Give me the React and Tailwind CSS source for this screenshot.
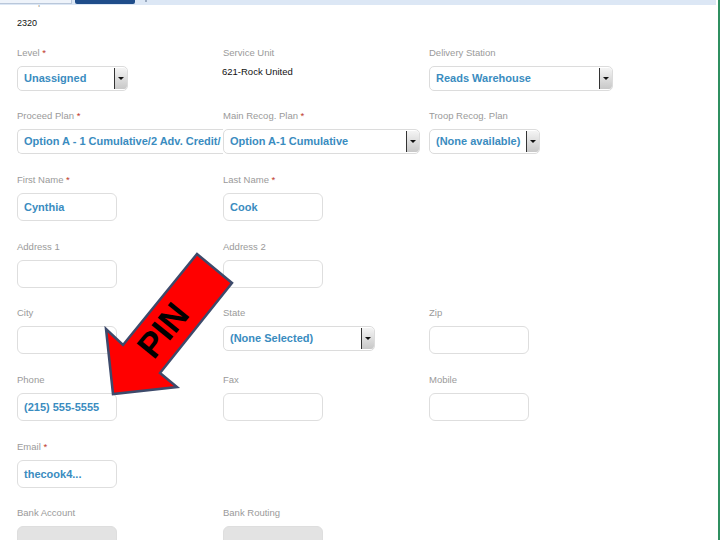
import React from "react";

const label = "block h-[11px] leading-[11px] text-[9.5px] text-[#9a9a9a] whitespace-nowrap";
const valueCls = "text-[11px] font-bold text-[#3a8cc0] whitespace-nowrap";

const Label = ({ text, required }) => (
  <span className={label}>
    {text}
    {required && <span className="text-[#c0392b]"> *</span>}
  </span>
);

const SelectBox = ({ value, width, clip }) => (
  <div
    className={`relative mt-[8px] h-[25px] flex items-center bg-white border border-[#dcdcdc] overflow-hidden ${clip ? "z-0 rounded-l-[5px] border-r-0" : "z-10 rounded-[5px]"}`}
    style={{ width }}
  >
    <span className={`pl-[6px] ${clip ? "" : "pr-[14px]"} overflow-hidden ${valueCls}`}>{value}</span>
    {!clip && (
      <span className="absolute right-[0px] top-[1px] bottom-[1px] w-[13px] border-l border-[#333] bg-gradient-to-b from-[#f4f4f4] to-[#c8c8c8] flex items-center justify-center rounded-r-[3px]">
        <span className="w-0 h-0 border-l-[3px] border-r-[3px] border-t-[3px] border-l-transparent border-r-transparent border-t-[#111]" />
      </span>
    )}
  </div>
);

const TextBox = ({ value, gray }) => (
  <div
    className={`mt-[8px] h-[28px] w-[100px] flex border border-[#dedede] rounded-[6px] ${gray ? "bg-[#e3e3e3] items-end" : "bg-white items-center"}`}
  >
    {value && (
      <span className={`pl-[6px] ${valueCls} ${gray ? "translate-y-[4px]" : ""}`}>{value}</span>
    )}
  </div>
);

const Field = ({ text, required, children }) => (
  <div className="flex flex-col items-start">
    <Label text={text} required={required} />
    {children}
  </div>
);

export default function App() {
  return (
    <div
      className="relative w-[720px] h-[540px] overflow-hidden bg-white"
      style={{ fontFamily: "'Liberation Sans', Arial, sans-serif" }}
    >
      {/* tab strip */}
      <div className="absolute top-0 left-0 w-[716px] h-[5px] bg-[#dce7f5] z-20 flex">
        <div className="w-[72px] h-[4px] bg-[#eef3fa] border-r border-b border-[#b9c7da]" />
        <div className="ml-[3px] w-[60px] h-[4px] bg-[#1f4d8a] rounded-b-[2px]" />
        <div className="ml-[10px] w-[2px] h-[2px] bg-[#9aaac0]" />
      </div>
      <div className="absolute top-0 right-0 w-[2px] h-[540px] bg-[#2f8f60] z-20" />

      <div className="pl-[17px] grid grid-cols-[206px_206px_206px]">
        {/* Group */}
        <div className="col-span-3 -mt-[4px] mb-[18px]">
          <Label text="Group" />
          <div className="mt-[11px] h-[11px] leading-[11px] text-[9px] text-[#111]">2320</div>
        </div>

        {/* Level row */}
        <div className="mb-[19px]">
          <Field text="Level" required>
            <SelectBox value="Unassigned" width={111} />
          </Field>
        </div>
        <div className="mb-[19px]">
          <Field text="Service Unit">
            <div className="mt-[8px] h-[11px] leading-[11px] text-[9.5px] text-[#111] -ml-[1px]">621-Rock United</div>
          </Field>
        </div>
        <div className="mb-[19px]">
          <Field text="Delivery Station">
            <SelectBox value="Reads Warehouse" width={184} />
          </Field>
        </div>

        {/* Plans row */}
        <div className="mb-[20px]">
          <Field text="Proceed Plan" required>
            <SelectBox value="Option A - 1 Cumulative/2 Adv. Credit/" width={206} clip />
          </Field>
        </div>
        <div className="mb-[20px]">
          <Field text="Main Recog. Plan" required>
            <SelectBox value="Option A-1 Cumulative" width={197} />
          </Field>
        </div>
        <div className="mb-[20px]">
          <Field text="Troop Recog. Plan">
            <SelectBox value="(None available)" width={111} />
          </Field>
        </div>

        {/* Names */}
        <div className="mb-[20px]">
          <Field text="First Name" required>
            <TextBox value="Cynthia" />
          </Field>
        </div>
        <div className="mb-[20px] col-span-2">
          <Field text="Last Name" required>
            <TextBox value="Cook" />
          </Field>
        </div>

        {/* Address */}
        <div className="mb-[19px]">
          <Field text="Address 1">
            <TextBox />
          </Field>
        </div>
        <div className="mb-[19px] col-span-2">
          <Field text="Address 2">
            <TextBox />
          </Field>
        </div>

        {/* City / State / Zip */}
        <div className="mb-[20px]">
          <Field text="City">
            <TextBox />
          </Field>
        </div>
        <div className="mb-[20px]">
          <Field text="State">
            <SelectBox value="(None Selected)" width={152} />
          </Field>
        </div>
        <div className="mb-[20px]">
          <Field text="Zip">
            <TextBox />
          </Field>
        </div>

        {/* Phones */}
        <div className="mb-[20px]">
          <Field text="Phone">
            <TextBox value="(215) 555-5555" />
          </Field>
        </div>
        <div className="mb-[20px]">
          <Field text="Fax">
            <TextBox />
          </Field>
        </div>
        <div className="mb-[20px]">
          <Field text="Mobile">
            <TextBox />
          </Field>
        </div>

        {/* Email */}
        <div className="mb-[19px] col-span-3">
          <Field text="Email" required>
            <TextBox value="thecook4..." />
          </Field>
        </div>

        {/* Bank */}
        <div>
          <Field text="Bank Account">
            <TextBox value="0" gray />
          </Field>
        </div>
        <div>
          <Field text="Bank Routing">
            <TextBox value="0" gray />
          </Field>
        </div>
      </div>

      {/* callout arrow */}
      <svg className="absolute left-0 top-0 z-30 pointer-events-none" width="720" height="540">
        <polygon
          points="197,254 232,283 160,373 177,387 113,394 106,329 123,345"
          fill="#ff0000"
          stroke="#3d4a6b"
          strokeWidth="2.5"
          strokeLinejoin="miter"
        />
        <text
          x="165"
          y="332"
          fill="#000"
          fontSize="35"
          fontWeight="bold"
          fontFamily="'Liberation Sans', Arial, sans-serif"
          textAnchor="middle"
          dominantBaseline="middle"
          transform="rotate(-51 165 332)"
        >
          PIN
        </text>
      </svg>
    </div>
  );
}
